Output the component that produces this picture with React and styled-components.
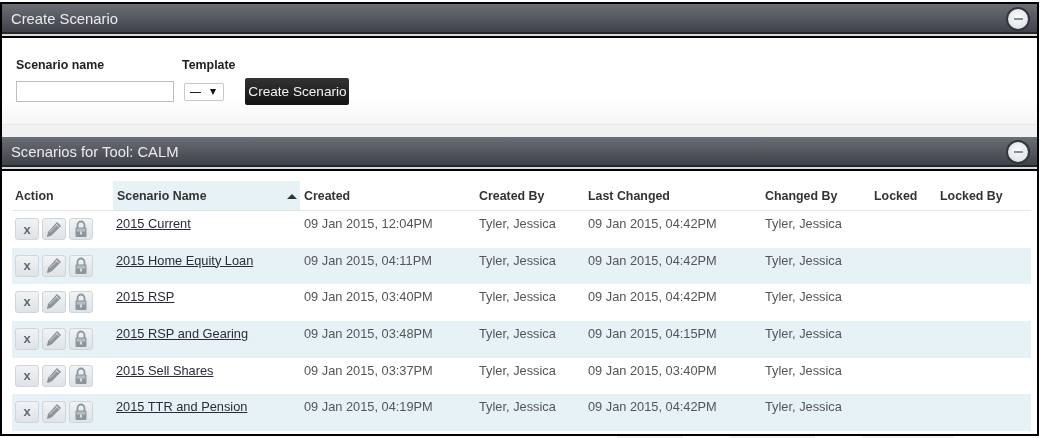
import React from "react";
import styled, { createGlobalStyle } from "styled-components";

const Global = createGlobalStyle`
  html, body { margin: 0; padding: 0; background: #fff; overflow: hidden; }
  body { font-family: "Liberation Sans", Arial, sans-serif; }
`;

const Frame = styled.div`
  box-sizing: border-box;
  width: 1039px;
  height: 434px;
  margin-top: 2px;
  border: 2px solid #000;
  background: #fff;
  overflow: hidden;
  filter: blur(0.3px);
`;

const Bar = styled.div`
  box-sizing: border-box;
  height: ${p => p.$h}px;
  display: flex;
  align-items: center;
  justify-content: space-between;
  padding: 1px 7px 0 9px;
  background: linear-gradient(#6b6e75, #3f424a);
  border-bottom: 2px solid #22252b;
  color: #e9ebee;
  font-size: 14.8px;
`;

const BarGap = styled.div`
  height: 2px;
  background: #d8d8d8;
  border-bottom: 2px solid #000;
`;

const Toggle = styled.div`
  box-sizing: border-box;
  width: 24px;
  height: 24px;
  border-radius: 50%;
  border: 2px solid #33363c;
  background: radial-gradient(circle at 50% 40%, #fbfcfc, #d4dcdf);
  display: flex;
  align-items: center;
  justify-content: center;
  &::after {
    content: "";
    width: 9px;
    height: 2px;
    background: #858d99;
  }
`;

const Form = styled.div`
  box-sizing: border-box;
  height: 87px;
  padding: 20px 0 0 14px;
  background: linear-gradient(#fff 70%, #f6f6f6);
  border-bottom: 1px solid #e8e8e8;
`;

const Spacer = styled.div`
  height: 12px;
  background: #f1f1f1;
`;

const FormRow = styled.div`
  display: flex;
  align-items: flex-end;
`;

const Field = styled.label`
  display: flex;
  flex-direction: column;
  margin-right: ${p => p.$mr}px;
  font-size: 12.4px;
  font-weight: bold;
  color: #222;
`;

const FieldLabel = styled.span`
  margin-bottom: ${p => p.$mb}px;
`;

const TextInput = styled.div`
  box-sizing: border-box;
  width: 158px;
  height: 21px;
  background: #fff;
  border: 1px solid #bdbdbd;
  margin-bottom: 4px;
`;

const Select = styled.div`
  box-sizing: border-box;
  width: 40px;
  height: 18px;
  margin: 0 0 5px 2px;
  border: 1px solid #c8c8c8;
  border-radius: 2px;
  background: #fff;
  display: flex;
  align-items: center;
  justify-content: space-between;
  padding: 0 7px 0 5px;
  font-size: 11px;
  font-weight: normal;
  color: #000;
`;

const Dash = styled.span`
  width: 11px;
  height: 1px;
  background: #222;
`;

const Arrow = styled.span`
  width: 0;
  height: 0;
  border: solid transparent;
  border-width: 6px 3px 0;
  border-top-color: #111;
`;

const CreateButton = styled.button`
  box-sizing: border-box;
  width: 104px;
  height: 27px;
  margin: 0 0 1px 2px;
  padding: 0;
  border: 0;
  border-radius: 2px;
  background: linear-gradient(#333, #131313);
  color: #f2f2f2;
  font: 13.6px "Liberation Sans", Arial, sans-serif;
`;

const Table = styled.table`
  border-collapse: collapse;
  table-layout: fixed;
  width: 1019px;
  margin: 10px 0 0 10px;
  font-size: 12.8px;
  color: #555;
`;

const Th = styled.th`
  height: 29px;
  padding: 0 0 0 ${p => p.$pl ?? 4}px;
  text-align: left;
  font-size: 12.4px;
  font-weight: bold;
  color: #333;
  border-bottom: 1px solid #e6e6e6;
  background: ${p => (p.$sorted ? "#e7f2f7" : "#fff")};
  position: relative;
`;

const SortArrow = styled.span`
  position: absolute;
  right: 3px;
  top: 13px;
  width: 0;
  height: 0;
  border: solid transparent;
  border-width: 0 5px 5px;
  border-bottom-color: #333;
`;

const Row = styled.tr`
  background: ${p => (p.$alt ? "#e7f2f7" : "#fff")};
`;

const Td = styled.td`
  box-sizing: border-box;
  height: ${p => p.$h}px;
  padding: 5px 0 0 4px;
  vertical-align: top;
  white-space: nowrap;
`;

const NameCell = styled(Td)`
  padding-left: 3px;
`;

const ActionCell = styled.td`
  box-sizing: border-box;
  padding: 7px 0 0 3px;
  vertical-align: top;
`;

const Actions = styled.div`
  display: flex;
  gap: 3px;
`;

const IconButton = styled.div`
  box-sizing: border-box;
  width: 24px;
  height: 22px;
  border: 1px solid #cfd5d8;
  border-radius: 3px;
  background: linear-gradient(#f1f3f4, #dfe3e5);
  display: flex;
  align-items: center;
  justify-content: center;
  color: #5f6b74;
  font-size: 13px;
  font-weight: bold;
`;

const NameLink = styled.a`
  color: #2b2b3a;
  text-decoration: underline;
`;

const Residue = styled.div`
  display: flex;
  height: 2px;
  padding-left: 617px;
  gap: 47px;
`;

const ResidueBar = styled.span`
  width: ${p => p.$w}px;
  background: #f0f0f0;
`;

const Pencil = () => (
  <svg width="16" height="17" viewBox="0 0 16 17">
    <path d="M11 1.5 L14.5 5 L5.5 14 L1.5 15.5 L2.5 11 Z" fill="#8d979e" stroke="#78838b" strokeWidth="0.8" strokeLinejoin="round" />
    <path d="M3.5 11 L11.5 3.5" stroke="#b5bcc1" strokeWidth="1.2" />
    <path d="M9.8 2.8 L13.2 6.2" stroke="#dfe3e5" strokeWidth="0.9" />
  </svg>
);

const Lock = () => (
  <svg width="14" height="18" viewBox="0 0 14 18">
    <path d="M3.5 8 V5 a3.5 3.5 0 0 1 7 0 V8" fill="none" stroke="#8c969d" strokeWidth="1.8" />
    <rect x="1.5" y="7.5" width="11" height="9.5" rx="1" fill="#8c969d" />
    <rect x="2.6" y="8.6" width="8.8" height="3" fill="#b6bdc2" />
    <rect x="6.2" y="11.5" width="1.6" height="3" fill="#eef0f1" />
  </svg>
);

const columns = [
  ["Action", 101, 3],
  ["Scenario Name", 187, 4],
  ["Created", 175, 4],
  ["Created By", 109, 4],
  ["Last Changed", 177, 4],
  ["Changed By", 109, 4],
  ["Locked", 66, 4],
  ["Locked By", 95, 4],
];

const rows = [
  ["2015 Current", "09 Jan 2015, 12:04PM", "09 Jan 2015, 04:42PM", 37],
  ["2015 Home Equity Loan", "09 Jan 2015, 04:11PM", "09 Jan 2015, 04:42PM", 36],
  ["2015 RSP", "09 Jan 2015, 03:40PM", "09 Jan 2015, 04:42PM", 37],
  ["2015 RSP and Gearing", "09 Jan 2015, 03:48PM", "09 Jan 2015, 04:15PM", 37],
  ["2015 Sell Shares", "09 Jan 2015, 03:37PM", "09 Jan 2015, 03:40PM", 36],
  ["2015 TTR and Pension", "09 Jan 2015, 04:19PM", "09 Jan 2015, 04:42PM", 37],
];

export default function App() {
  return (
    <>
      <Global />
      <Frame>
        <Bar $h={30}>
          <span>Create Scenario</span>
          <Toggle />
        </Bar>
        <BarGap />
        <Form>
          <FormRow>
            <Field $mr={8}>
              <FieldLabel $mb={9}>Scenario name</FieldLabel>
              <TextInput />
            </Field>
            <Field $mr={8}>
              <FieldLabel $mb={11}>Template</FieldLabel>
              <Select>
                <Dash />
                <Arrow />
              </Select>
            </Field>
            <CreateButton>Create Scenario</CreateButton>
          </FormRow>
        </Form>
        <Spacer />
        <Bar $h={30}>
          <span>Scenarios for Tool: CALM</span>
          <Toggle />
        </Bar>
        <BarGap />
        <Table>
          <colgroup>
            {columns.map(([n, w]) => (
              <col key={n} style={{ width: w }} />
            ))}
          </colgroup>
          <thead>
            <tr>
              {columns.map(([n, , pl]) => (
                <Th key={n} $pl={pl} $sorted={n === "Scenario Name"}>
                  {n}
                  {n === "Scenario Name" && <SortArrow />}
                </Th>
              ))}
            </tr>
          </thead>
          <tbody>
            {rows.map(([name, created, changed, h], i) => (
              <Row key={name} $alt={i % 2 === 1}>
                <ActionCell>
                  <Actions>
                    <IconButton>x</IconButton>
                    <IconButton><Pencil /></IconButton>
                    <IconButton><Lock /></IconButton>
                  </Actions>
                </ActionCell>
                <NameCell $h={h}><NameLink href="#">{name}</NameLink></NameCell>
                <Td $h={h}>{created}</Td>
                <Td $h={h}>Tyler, Jessica</Td>
                <Td $h={h}>{changed}</Td>
                <Td $h={h}>Tyler, Jessica</Td>
                <Td $h={h} />
                <Td $h={h} />
              </Row>
            ))}
          </tbody>
        </Table>
      </Frame>
      <Residue>
        <ResidueBar $w={66} />
        <ResidueBar $w={85} />
        <ResidueBar $w={92} />
      </Residue>
    </>
  );
}
